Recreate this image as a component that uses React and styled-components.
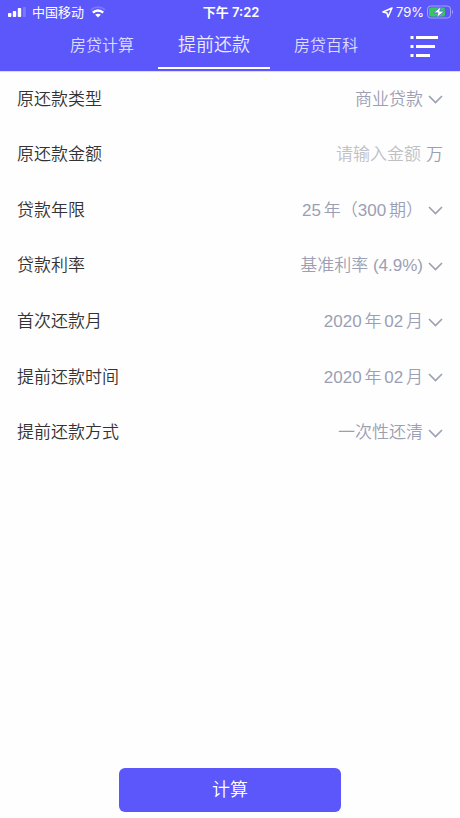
import React, { useState } from "react";
import styled, { createGlobalStyle } from "styled-components";

const GlobalStyle = createGlobalStyle`
  *, *::before, *::after { box-sizing: border-box; }
  body {
    margin: 0;
    background: #fefefe;
    font-family: "Liberation Sans", "Noto Sans CJK SC", sans-serif;
  }
  button, input, select { font: inherit; }
`;

const Page = styled.div`
  display: flex;
  flex-direction: column;
  min-height: 100vh;
`;

const Header = styled.header`
  background: #5b57fb;
  border-bottom: 1px solid #d9d8fe;
  color: #ffffff;
`;

const StatusBar = styled.div`
  display: grid;
  grid-template-columns: 1fr auto 1fr;
  align-items: center;
  height: 24px;
  padding: 0 6px 0 8px;
  font-family: Inter, "Noto Sans CJK SC", sans-serif;
  font-size: 13px;
  line-height: 20px;
`;

const StatusGroup = styled.div`
  display: flex;
  align-items: center;
  justify-content: ${(p) => (p.$end ? "flex-end" : "flex-start")};
  gap: ${(p) => (p.$end ? "3px" : "6px")};

  svg { display: block; flex: none; }
`;

const Clock = styled.time`
  font-weight: 600;
`;

const NavRow = styled.div`
  display: flex;
  height: 47px;
  padding-left: 46px;
`;

const Tabs = styled.nav`
  display: flex;
  flex: 1;
`;

const Tab = styled.a`
  flex: 1;
  height: 45px;
  border-bottom: 2px solid ${(p) => (p.$active ? "#ffffff" : "transparent")};
  color: ${(p) => (p.$active ? "#eeedff" : "#dddcff")};
  font-size: ${(p) => (p.$active ? "18px" : "16px")};
  font-weight: 350;
  line-height: 43px;
  text-align: center;
  text-decoration: none;
  white-space: nowrap;
`;

const MenuButton = styled.button`
  display: flex;
  align-items: center;
  justify-content: center;
  width: 78px;
  height: 46px;
  padding: 0 0 0 6px;
  border: 0;
  background: none;
  color: #ffffff;
`;

const Form = styled.form`
  display: flex;
  flex: 1;
  flex-direction: column;
`;

const Fields = styled.div`
  display: grid;
  grid-auto-rows: 1fr;
  min-height: 389px;
`;

const Row = styled.div`
  display: flex;
  align-items: center;
  padding: 0 17px;
  font-size: 17px;
  font-weight: 350;
  line-height: 24px;
`;

const Label = styled.label`
  flex: none;
  color: #333333;
`;

const Select = styled.select`
  flex: 1;
  min-width: 0;
  height: 40px;
  margin: 0 5px 0 8px;
  padding: 0;
  border: 0;
  outline: 0;
  appearance: none;
  background: none;
  color: #9c9fb4;
  text-align-last: right;
`;

const Input = styled.input`
  flex: 1;
  min-width: 0;
  height: 40px;
  margin: 0 5px 0 8px;
  padding: 0;
  border: 0;
  outline: 0;
  background: none;
  color: #9c9fb4;
  text-align: right;

  &::placeholder { color: #c0c0c4; opacity: 1; }
`;

const Unit = styled.span`
  color: #9c9fb4;
`;

const Chevron = styled.svg`
  flex: none;
  display: block;
  color: #9c9fb4;
  pointer-events: none;
`;

const Footer = styled.div`
  display: flex;
  justify-content: center;
  margin-top: auto;
  padding: 24px 0 6px;
`;

const Submit = styled.button`
  width: 222px;
  height: 44px;
  padding: 0;
  border: 0;
  border-radius: 6px;
  background: #5b57fb;
  color: #ffffff;
  font-size: 18px;
  font-weight: 350;
  line-height: 44px;
`;

const tabs = ["房贷计算", "提前还款", "房贷百科"];

const fields = [
  { id: "type", label: "原还款类型", options: ["商业贷款", "公积金贷款"] },
  { id: "amount", label: "原还款金额", placeholder: "请输入金额", unit: "万" },
  { id: "term", label: "贷款年限", options: ["25\u2006年（300\u2006期）", "30\u2006年（360\u2006期）"] },
  { id: "rate", label: "贷款利率", options: ["基准利率 (4.9%)"] },
  { id: "first", label: "首次还款月", options: ["2020\u2006年\u200602\u2006月", "2020\u2006年\u200603\u2006月"] },
  { id: "early", label: "提前还款时间", options: ["2020\u2006年\u200602\u2006月", "2020\u2006年\u200603\u2006月"] },
  { id: "method", label: "提前还款方式", options: ["一次性还清", "部分还款"] },
];

function SignalIcon() {
  return (
    <svg width="18" height="10" viewBox="0 0 18 10" fill="currentColor" aria-hidden="true">
      <rect x="0" y="6" width="3.4" height="4" rx="0.8" />
      <rect x="4.8" y="4" width="3.4" height="6" rx="0.8" />
      <rect x="9.8" y="1" width="3.4" height="9" rx="0.8" />
      <rect x="14.8" y="0" width="3" height="10" rx="0.8" opacity="0.2" />
    </svg>
  );
}

function WifiIcon() {
  return (
    <svg width="16" height="12" viewBox="0 0 16 12" fill="none" stroke="currentColor" aria-hidden="true">
      <path d="M1 3.8C5 0.2 11 0.2 15 3.8" strokeWidth="1.8" opacity="0.2" />
      <path d="M2.8 6.6C5.8 3.7 10.2 3.7 13.2 6.6" strokeWidth="2.4" />
      <path d="M5.2 8.7C7 7.3 9 7.3 10.8 8.7L8 11.6Z" fill="currentColor" stroke="none" />
    </svg>
  );
}

function LocationIcon() {
  return (
    <svg width="11" height="11" viewBox="0 0 11 11" fill="none" stroke="currentColor" strokeWidth="1.5" strokeLinejoin="round" aria-hidden="true">
      <path d="M10 1L0.9 5L5 5.9L6 10Z" />
    </svg>
  );
}

function BatteryIcon() {
  return (
    <svg width="27" height="14" viewBox="0 0 27 14" aria-hidden="true">
      <rect x="0.5" y="1" width="23" height="12" rx="3.2" fill="none" stroke="#ffffff" strokeOpacity="0.45" />
      <path d="M25 5v4c1.4-.6 1.4-3.4 0-4Z" fill="#ffffff" opacity="0.45" />
      <rect x="2" y="2.5" width="16" height="9" rx="2" fill="#35c759" />
      <path d="M13.8 1.5L6.8 7.8H11L9.6 12.7L17.2 6.2H12.7Z" fill="#ffffff" stroke="#5b57fb" strokeWidth="0.7" />
    </svg>
  );
}

function MenuIcon() {
  return (
    <svg width="28" height="22" viewBox="0 0 28 22" fill="currentColor" aria-hidden="true">
      <path d="M0.5 0h3v3h-3zM6 0H28v3H6zM0.5 9h3v3h-3zM6 9H25v3H6zM0.5 18h3v3h-3zM6 18H20v3H6z" />
    </svg>
  );
}

function Field({ field }) {
  const [value, setValue] = useState(field.options ? field.options[0] : "");
  const shared = {
    id: field.id,
    value,
    onChange: (event) => setValue(event.target.value),
  };

  return (
    <Row>
      <Label htmlFor={field.id}>{field.label}</Label>
      {field.options ? (
        <>
          <Select {...shared}>
            {field.options.map((option) => (
              <option key={option}>{option}</option>
            ))}
          </Select>
          <Chevron width="15" height="9" viewBox="0 0 15 9" fill="none" stroke="currentColor" strokeWidth="1.6" aria-hidden="true">
            <path d="M1 1L7.5 7.6L14 1" />
          </Chevron>
        </>
      ) : (
        <>
          <Input {...shared} inputMode="decimal" placeholder={field.placeholder} />
          <Unit>{field.unit}</Unit>
        </>
      )}
    </Row>
  );
}

export default function App() {
  const [active, setActive] = useState(1);

  return (
    <>
      <GlobalStyle />
      <Page>
        <Header>
          <StatusBar>
            <StatusGroup>
              <SignalIcon />
              <span>中国移动</span>
              <WifiIcon />
            </StatusGroup>
            <Clock>下午 7:22</Clock>
            <StatusGroup $end>
              <LocationIcon />
              <span>79%</span>
              <BatteryIcon />
            </StatusGroup>
          </StatusBar>
          <NavRow>
            <Tabs>
              {tabs.map((tab, index) => (
                <Tab
                  key={tab}
                  href="#"
                  $active={index === active}
                  aria-current={index === active ? "page" : undefined}
                  onClick={() => setActive(index)}
                >
                  {tab}
                </Tab>
              ))}
            </Tabs>
            <MenuButton type="button" aria-label="菜单">
              <MenuIcon />
            </MenuButton>
          </NavRow>
        </Header>
        <Form onSubmit={(event) => event.preventDefault()}>
          <Fields>
            {fields.map((field) => (
              <Field key={field.id} field={field} />
            ))}
          </Fields>
          <Footer>
            <Submit type="submit">计算</Submit>
          </Footer>
        </Form>
      </Page>
    </>
  );
}
